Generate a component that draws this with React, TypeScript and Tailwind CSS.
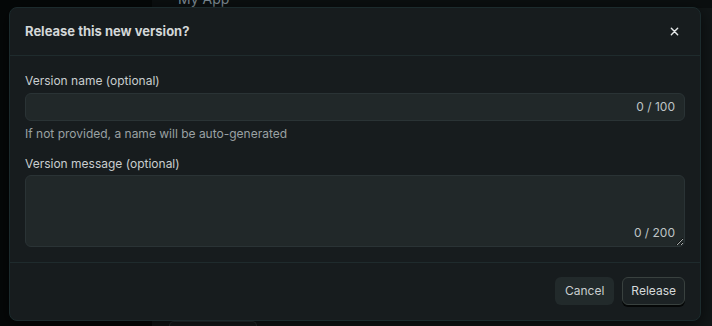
import React, { useState } from "react";

const App: React.FC = () => {
  const [name, setName] = useState("");
  const [message, setMessage] = useState("");

  return (
    <div
      className="relative w-[712px] h-[326px] overflow-hidden bg-[#0f1314] flex"
      style={{ fontFamily: "Inter, 'Noto Sans', sans-serif" }}
    >
      {/* page behind the dialog */}
      <div className="w-[152px] h-full bg-[#050808]" />
      <div className="flex-1 flex flex-col">
        <div className="h-[8px] bg-[#0b0f10] pl-[26px] text-[14px] leading-[14px] text-[#7d8a93] overflow-hidden">
          <div className="-mt-[8px]">My App</div>
        </div>
        <div className="flex-1 bg-[#111617] flex flex-col justify-end pl-[17px]">
          <div className="w-[88px] h-[5px] rounded-t-[8px] border border-b-0 border-[#2a3234] bg-[#161b1c]" />
        </div>
      </div>

      {/* dialog */}
      <div className="absolute left-[9px] top-[7px] w-[692px] h-[314px] rounded-[8px] border border-[#1c2b2d] bg-[#171c1e] flex flex-col shadow-[0_4px_16px_rgba(0,0,0,0.6)]">
        <div className="h-[48px] flex items-center justify-between pl-[15px] pr-[21px] border-b border-[#1f2b2d]">
          <h2 className="text-[13px] font-bold text-[#d3d7d8]">Release this new version?</h2>
          <button className="w-[10px] h-[10px] flex items-center justify-center text-[#e4e7e8]">
            <svg width="9" height="9" viewBox="0 0 10 10" fill="none">
              <path d="M1.5 1.5l7 7M8.5 1.5l-7 7" stroke="currentColor" strokeWidth="1.6" strokeLinecap="round" />
            </svg>
          </button>
        </div>

        <div className="flex flex-col px-[15px] pt-[17px] pb-[15px] border-b border-[#1f2b2d]">
          <label className="text-[12px] leading-[16px] text-[#c9cecf] mb-[4px]">Version name (optional)</label>
          <div className="relative">
            <input
              value={name}
              maxLength={100}
              onChange={(e) => setName(e.target.value)}
              className="w-full h-[28px] rounded-[6px] border border-[#2a3335] bg-[#212829] px-[10px] pr-[60px] text-[12px] text-[#d3d7d8] outline-none"
            />
            <span className="absolute right-[10px] top-0 h-[28px] flex items-center text-[12px] text-[#bfc4c6]">
              {name.length} / 100
            </span>
          </div>
          <p className="mt-[5px] text-[12px] leading-[16px] text-[#9aa1a3]">If not provided, a name will be auto-generated</p>

          <label className="mt-[14px] text-[12px] leading-[16px] text-[#c9cecf] mb-[3px]">Version message (optional)</label>
          <div className="relative">
            <textarea
              value={message}
              maxLength={200}
              onChange={(e) => setMessage(e.target.value)}
              className="block w-full h-[72px] rounded-[6px] border border-[#2a3335] bg-[#212829] px-[10px] py-[6px] text-[12px] text-[#d3d7d8] outline-none resize-y"
            />
            <span className="absolute right-[10px] bottom-[6px] text-[12px] leading-[16px] text-[#bfc4c6]">
              {message.length} / 200
            </span>
          </div>
        </div>

        <div className="flex justify-end gap-[8px] px-[15px] pt-[14px]">
          <button className="h-[28px] px-[10px] rounded-[6px] bg-[#222a2b] text-[12px] text-[#c9cecf]">Cancel</button>
          <button className="h-[28px] px-[8px] rounded-[6px] border border-[#39413f] bg-[#1c2224] text-[12px] text-[#d6dadb] shadow-[0_2px_0_#050707]">
            Release
          </button>
        </div>
      </div>
    </div>
  );
};

export default App;
